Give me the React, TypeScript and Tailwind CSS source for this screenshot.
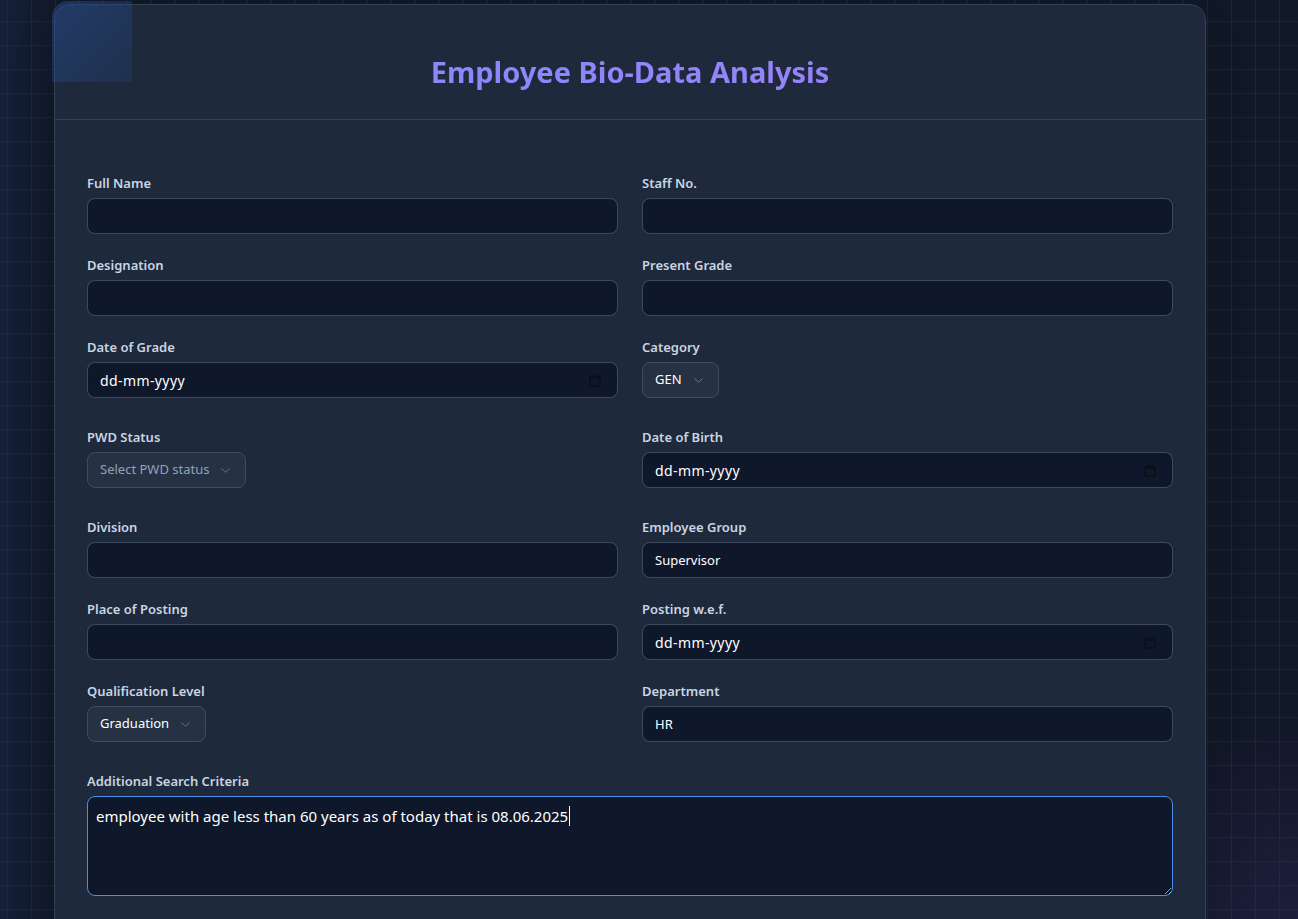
import React, { useState } from 'react'
import { ChevronDown } from 'lucide-react'

const font = { fontFamily: '"Noto Sans", "Liberation Sans", sans-serif' }

const Label = ({ children }: { children: React.ReactNode }) => (
  <label className="block text-[13px] leading-5 font-semibold text-slate-300 mb-[5px]">{children}</label>
)

const TextInput = ({ value = '' }: { value?: string }) => (
  <input
    type="text"
    defaultValue={value}
    className="w-full h-9 rounded-lg bg-[#0f172a] border border-[#475569]/80 px-3 text-[13px] text-white outline-none"
  />
)

const CalendarIcon = () => (
  <svg width="12" height="13" viewBox="0 0 12 13" fill="none">
    <rect x="1" y="2.5" width="10" height="9.5" rx="1" stroke="#0b0f17" strokeWidth="1.4" />
    <rect x="1" y="2.5" width="10" height="2.5" fill="#0b0f17" />
    <rect x="3" y="0.5" width="1.4" height="2.5" fill="#0b0f17" />
    <rect x="7.6" y="0.5" width="1.4" height="2.5" fill="#0b0f17" />
  </svg>
)

const DateInput = () => (
  <div className="w-full h-9 rounded-lg bg-[#0f172a] border border-[#475569]/80 pl-3 pr-4 flex items-center justify-between text-[14px] tracking-[0.4px] text-white">
    <span>dd-mm-yyyy</span>
    <CalendarIcon />
  </div>
)

const Select = ({ value, placeholder }: { value?: string; placeholder?: string }) => (
  <div className="inline-flex h-9 mb-2 items-center gap-[9px] rounded-lg bg-[#263244] border border-[#3f4b5e] pl-3 pr-3 text-[13px]">
    <span className={value ? 'text-white' : 'text-slate-400'}>{value ?? placeholder}</span>
    <ChevronDown size={15} className="text-slate-500" strokeWidth={1.5} />
  </div>
)

const Field = ({ label, children }: { label: string; children: React.ReactNode }) => (
  <div>
    <Label>{label}</Label>
    {children}
  </div>
)

export default function App() {
  const [criteria, setCriteria] = useState('employee with age less than 60 years as of today that is 08.06.2025')

  return (
    <div
      style={font}
      className="relative min-h-screen overflow-hidden bg-[#111827] bg-[linear-gradient(to_right,rgba(51,65,85,0.28)_1px,transparent_1px),linear-gradient(to_bottom,rgba(51,65,85,0.28)_1px,transparent_1px)] bg-[size:24px_24px] bg-[position:7px_21px]"
    >
      <div className="absolute right-0 bottom-0 w-[220px] h-[220px] bg-[radial-gradient(circle_at_bottom_right,rgba(88,60,160,0.18),transparent_70%)]" />
      <div className="absolute left-0 top-0 w-[60px] h-full bg-[linear-gradient(to_right,rgba(30,58,110,0.25),transparent)]" />

      <div className="relative ml-[54px] mt-1 w-[1152px] rounded-2xl border border-[#334155] bg-[#1e293b] shadow-2xl">
        <div className="absolute -left-[3px] -top-[4px] w-20 h-[81px] rounded-tl-2xl bg-[linear-gradient(135deg,rgba(37,74,140,0.55),rgba(37,74,140,0.22))]" />

        {/* Header */}
        <div className="border-b border-[#334155] pt-[49px] pb-[29px] text-center">
          <h1 className="text-[29px] leading-9 font-bold bg-gradient-to-r from-[#7a8eff] to-[#a27cf5] bg-clip-text text-transparent">
            Employee Bio-Data Analysis
          </h1>
        </div>

        {/* Form */}
        <div className="px-8 pt-[53px] pb-10">
          <div className="grid grid-cols-2 gap-x-6 gap-y-[21px]">
            <Field label="Full Name"><TextInput /></Field>
            <Field label="Staff No."><TextInput /></Field>
            <Field label="Designation"><TextInput /></Field>
            <Field label="Present Grade"><TextInput /></Field>
            <Field label="Date of Grade"><DateInput /></Field>
            <Field label="Category"><Select value="GEN" /></Field>
            <Field label="PWD Status"><Select placeholder="Select PWD status" /></Field>
            <Field label="Date of Birth"><DateInput /></Field>
            <Field label="Division"><TextInput /></Field>
            <Field label="Employee Group"><TextInput value="Supervisor" /></Field>
            <Field label="Place of Posting"><TextInput /></Field>
            <Field label="Posting w.e.f."><DateInput /></Field>
            <Field label="Qualification Level"><Select value="Graduation" /></Field>
            <Field label="Department"><TextInput value="HR" /></Field>
            <div className="col-span-2">
              <Label>Additional Search Criteria</Label>
              <div className="relative">
                <textarea
                  value={criteria}
                  onChange={e => setCriteria(e.target.value)}
                  className="block w-full h-[100px] rounded-lg bg-[#0f172a] border border-[#4a8fe7] px-2 pt-[9px] pb-2 text-[15px] leading-5 text-white outline-none"
                />
                <span className="absolute left-[482px] top-[10px] w-px h-[20px] bg-white" />
              </div>
            </div>
          </div>
        </div>
      </div>
    </div>
  )
}
